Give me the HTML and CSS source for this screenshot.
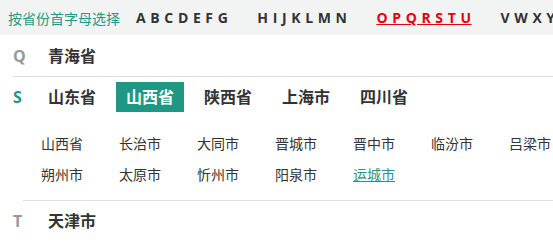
FILE: index.html
```html
<!DOCTYPE html>
<html lang="zh-CN">
<head>
  <meta charset="UTF-8" />
  <meta name="viewport" content="width=device-width, initial-scale=1" />
  <title>城市选择</title>
  <link rel="stylesheet" href="styles.css">
</head>
<body>

<!-- 首字母 -->
  <div class="letter-bar">
    <span class="bar-title">按省份首字母选择</span>
    <a href="#" class="letter-group">A B C D E F G</a>
    <a href="#" class="letter-group">H I J K L M N</a>
    <a href="#" class="letter-group active">O P Q R S T U</a>
    <a href="#" class="letter-group">V W X Y Z</a>
  </div>

<!-- 省份列表 -->
  <div class="prov-row">
    <div class="prov-line">
      <span class="initial">Q</span>
      <div class="prov-list">
        <a href="#" class="prov">青海省</a>
      </div>
    </div>
  </div>

  <div class="prov-row open">
    <div class="prov-line">
      <span class="initial current">S</span>
      <div class="prov-list">
        <a href="#" class="prov">山东省</a>
        <a href="#" class="prov active">山西省</a>
        <a href="#" class="prov">陕西省</a>
        <a href="#" class="prov">上海市</a>
        <a href="#" class="prov">四川省</a>
      </div>
    </div>
    <div class="city-panel">
      <a href="#" class="city">山西省</a>
      <a href="#" class="city">长治市</a>
      <a href="#" class="city">大同市</a>
      <a href="#" class="city">晋城市</a>
      <a href="#" class="city">晋中市</a>
      <a href="#" class="city">临汾市</a>
      <a href="#" class="city">吕梁市</a>
      <a href="#" class="city">朔州市</a>
      <a href="#" class="city">太原市</a>
      <a href="#" class="city">忻州市</a>
      <a href="#" class="city">阳泉市</a>
      <a href="#" class="city active">运城市</a>
    </div>
  </div>

  <div class="prov-row last">
    <div class="prov-line">
      <span class="initial">T</span>
      <div class="prov-list">
        <a href="#" class="prov">天津市</a>
      </div>
    </div>
  </div>

</body>
</html>
```

FILE: styles.css
```css
    * {
      margin: 0;
      padding: 0;
      box-sizing: border-box;
    }

    html, body {
      overflow: hidden;
    }

    body {
      font-family: 'Open Sans', 'Noto Sans CJK SC', sans-serif;
      background: #FFFFFF;
      color: #333;
      width: 553px;
    }

    a {
      color: #333;
      text-decoration: none;
    }

/* 首字母 */
    .letter-bar {
      height: 35px;
      background: #f2f3f3;
      padding-left: 8px;
      display: flex;
      align-items: center;
      white-space: nowrap;
    }

    .bar-title {
      color: #1f9a86;
      font-size: 14px;
      margin-right: 16px;
    }

    .letter-group {
      font-size: 14px;
      font-weight: bold;
      letter-spacing: 0.5px;
      margin-right: 29px;
      flex-shrink: 0;
    }

    .letter-group.active {
      color: #e50012;
      text-decoration: underline;
    }

/* 省份 */
    .prov-row {
      border-bottom: 1px solid #e0e0e0;
      margin-left: 13px;
    }

    .prov-row.open {
      border-bottom: none;
      margin-left: 0;
    }

    .prov-row.last {
      border-bottom: none;
    }

    .prov-line {
      display: flex;
      align-items: center;
      height: 41px;
    }

    .last .prov-line {
      height: 40px;
    }

    .open .prov-line {
      height: auto;
      padding: 5px 0 0 13px;
    }

    .initial {
      width: 25px;
      font-size: 16px;
      font-weight: bold;
      color: #999;
    }

    .initial.current {
      color: #1f9784;
    }

    .prov-list {
      display: flex;
    }

    .prov {
      font-size: 16px;
      font-weight: bold;
      line-height: 30px;
      padding: 0 10px;
      margin-right: 10px;
    }

    .prov.active {
      background: #1f9784;
      color: #fff;
    }

/* 城市 */
    .city-panel {
      display: grid;
      grid-template-columns: repeat(7, 78px);
      margin: 16px 0 0 23px;
      padding: 0 0 10px 18px;
      border-bottom: 1px solid #e0e0e0;
      width: 566px;
    }

    .city {
      font-size: 14px;
      line-height: 31px;
      white-space: nowrap;
    }

    .city.active {
      color: #1f9784;
      text-decoration: underline;
    }
```
